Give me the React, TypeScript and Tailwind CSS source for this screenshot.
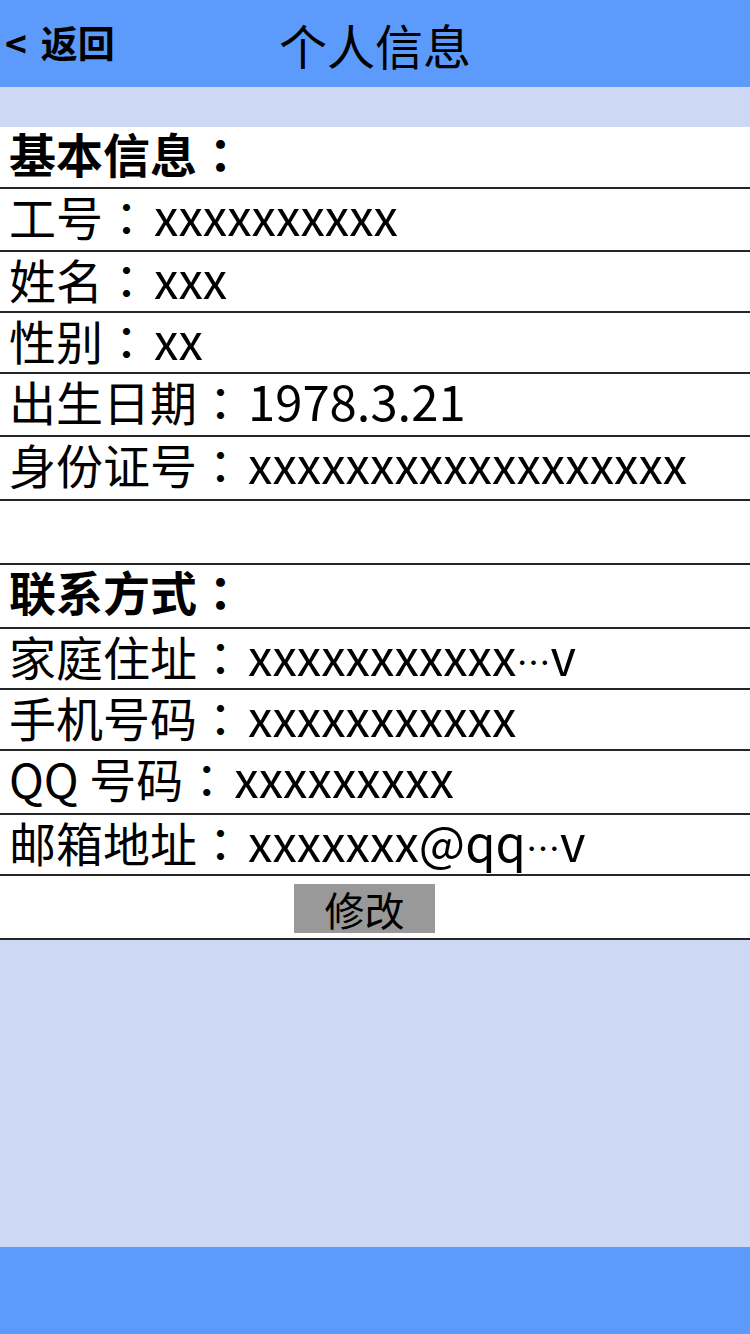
import React from "react";

const font = { fontFamily: '"Noto Sans CJK SC", "Noto Sans", sans-serif' };
const tc = { fontFamily: '"Noto Sans CJK TC", sans-serif' };

type Row = { label: string; value?: string; tail?: string; h: string; bold?: boolean };

const rows: Row[] = [
  { label: "基本信息", h: "h-[62px]", bold: true },
  { label: "工号", value: "xxxxxxxxxx", h: "h-[63px]" },
  { label: "姓名", value: "xxx", h: "h-[61px]" },
  { label: "性别", value: "xx", h: "h-[61px]" },
  { label: "出生日期", value: "1978.3.21", h: "h-[63px]" },
  { label: "身份证号", value: "xxxxxxxxxxxxxxxxxx", h: "h-[64px]" },
  { label: "", h: "h-[64px]" },
  { label: "联系方式", h: "h-[64px]", bold: true },
  { label: "家庭住址", value: "xxxxxxxxxxx", tail: "v", h: "h-[61px]" },
  { label: "手机号码", value: "xxxxxxxxxxx", h: "h-[61px]" },
  { label: "QQ 号码", value: "xxxxxxxxx", h: "h-[64px]" },
  { label: "邮箱地址", value: "xxxxxxx@qq", tail: "v", h: "h-[61px]" },
];

export default function App() {
  return (
    <div className="flex h-[1334px] w-[750px] flex-col bg-[#cdd8f5] text-black" style={font}>
      {/* header */}
      <div className="relative flex h-[87px] items-center justify-center bg-[#5c9bfb]">
        <div className="absolute left-[5px] top-[24px] flex items-center text-[37px] font-bold leading-none">
          <span className="mr-[14px]">&lt;</span>
          <span>返回</span>
        </div>
        <div className="text-[48px] leading-none">个人信息</div>
      </div>
      <div className="h-[40px]" />

      {/* info list */}
      <div className="bg-white">
        {rows.map((r, i) => (
          <div
            key={i}
            className={`flex items-baseline border-b-2 border-[#262626] pl-[9px] text-[47px] leading-[52px] whitespace-nowrap ${r.h} ${r.bold ? "font-bold" : ""}`}
          >
            {r.label && (
              <>
                <span>{r.label}</span>
                <span style={tc} className="mr-[4px]">：</span>
                {r.value && <span className="text-[49px]">{r.value}</span>}
                {r.tail && (
                  <>
                    <span style={tc} className="text-[34px]">…</span>
                    <span className="text-[49px]">{r.tail}</span>
                  </>
                )}
              </>
            )}
          </div>
        ))}
        <div className="flex h-[64px] items-center justify-center border-b-2 border-[#262626] pt-[3px]">
          <button className="ml-[-21px] h-[49px] w-[141px] bg-[#999999] text-[40px] leading-none">修改</button>
        </div>
      </div>

      <div className="flex-1" />
      <div className="h-[87px] bg-[#5c9bfb]" />
    </div>
  );
}
